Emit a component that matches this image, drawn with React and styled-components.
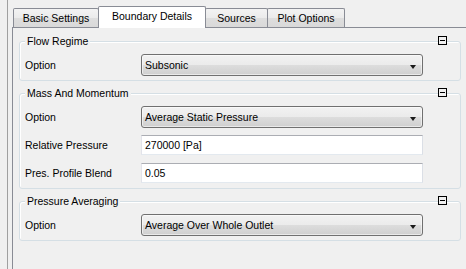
import React from "react";
import styled, { createGlobalStyle } from "styled-components";

const GlobalStyle = createGlobalStyle`
  html, body { margin: 0; padding: 0; background: #f0f0f0; overflow: hidden; }
  body {
    font-family: "Liberation Sans", Arial, sans-serif;
    font-size: 10.5px;
    color: #000;
  }
  * { box-sizing: border-box; }
`;

const Window = styled.div`
  height: 269px;
  padding-left: 7px;
`;

const Frame = styled.div`
  height: 100%;
  border-left: 1px solid #a0a0a0;
  padding: 6px 0 0 4px;
  display: flex;
  flex-direction: column;
`;

const TabBar = styled.div`
  display: flex;
  align-items: flex-end;
  height: 21px;
  padding-left: 1px;
  position: relative;
  z-index: 1;
`;

const Tab = styled.div`
  width: ${(p) => p.$w}px;
  height: ${(p) => (p.$active ? 22 : 19)}px;
  margin-bottom: ${(p) => (p.$active ? -1 : 0)}px;
  margin-left: -1px;
  &:first-child { margin-left: 0; }
  border: 1px solid #898c95;
  border-bottom: none;
  border-radius: 2px 2px 0 0;
  background: ${(p) =>
    p.$active
      ? "#ffffff"
      : "linear-gradient(#f3f3f3 0%, #ebebeb 50%, #dedede 51%, #d9d9d9 100%)"};
  position: relative;
  z-index: ${(p) => (p.$active ? 2 : 1)};
  text-align: center;
  line-height: ${(p) => (p.$active ? 19 : 18)}px;
  white-space: nowrap;
`;

const Pane = styled.div`
  flex: 1;
  border-top: 1px solid #898c95;
  border-left: 1px solid #898c95;
  padding: 13px 0 0 6px;
  display: flex;
  flex-direction: column;
  gap: 12px;
`;

const Group = styled.div`
  position: relative;
  width: 442px;
  border: 1px solid #d5dfe5;
  border-radius: 3px;
  box-shadow: inset 1px 1px 0 #ffffff;
  padding: 12px 0 4px 5px;
  display: grid;
  grid-template-columns: 116px 282px;
  row-gap: 6px;
  align-items: center;
`;

const GroupTitle = styled.div`
  position: absolute;
  top: -7px;
  left: 5px;
  padding: 0 2px;
  line-height: 13px;
  background: #f0f0f0;
  white-space: nowrap;
`;

const Collapse = styled.div`
  position: absolute;
  top: -6px;
  right: 13px;
  width: 9px;
  height: 9px;
  border: 1px solid #000;
  background: #f0f0f0;
  &::after {
    content: "";
    position: absolute;
    left: 1px;
    top: 3px;
    width: 5px;
    height: 1px;
    background: #000;
  }
`;

const Label = styled.div`
  white-space: nowrap;
  line-height: 22px;
`;

const Combo = styled.div`
  height: 22px;
  border: 1px solid #707070;
  border-radius: 3px;
  background: linear-gradient(#f2f2f2 0%, #ebebeb 50%, #dddddd 50%, #cfcfcf 100%);
  box-shadow: inset 0 0 0 1px rgba(255, 255, 255, 0.55);
  display: flex;
  align-items: center;
  justify-content: space-between;
  padding: 0 6px 0 3px;
  white-space: nowrap;
`;

const Arrow = styled.span`
  width: 0;
  height: 0;
  margin-top: 3px;
  border-left: 3.5px solid transparent;
  border-right: 3.5px solid transparent;
  border-top: 4px solid #1a1a1a;
`;

const Field = styled.div`
  height: 20px;
  border: 1px solid;
  border-color: #abadb3 #dbdfe6 #e3e9ef #e2e3ea;
  background: #ffffff;
  padding-left: 3px;
  line-height: 18px;
  white-space: nowrap;
`;

const tabs = [
  { label: "Basic Settings", w: 86 },
  { label: "Boundary Details", w: 108, active: true },
  { label: "Sources", w: 63 },
  { label: "Plot Options", w: 78 },
];

const groups = [
  {
    title: "Flow Regime",
    rows: [{ label: "Option", combo: "Subsonic" }],
  },
  {
    title: "Mass And Momentum",
    rows: [
      { label: "Option", combo: "Average Static Pressure" },
      { label: "Relative Pressure", field: "270000 [Pa]" },
      { label: "Pres. Profile Blend", field: "0.05" },
    ],
  },
  {
    title: "Pressure Averaging",
    rows: [{ label: "Option", combo: "Average Over Whole Outlet" }],
  },
];

export default function App() {
  return (
    <>
      <GlobalStyle />
      <Window>
        <Frame>
          <TabBar>
            {tabs.map((t) => (
              <Tab key={t.label} $w={t.w} $active={t.active}>
                {t.label}
              </Tab>
            ))}
          </TabBar>
          <Pane>
            {groups.map((g) => (
              <Group key={g.title}>
                <GroupTitle>{g.title}</GroupTitle>
                <Collapse />
                {g.rows.map((r) => (
                  <React.Fragment key={r.label}>
                    <Label>{r.label}</Label>
                    {r.combo ? (
                      <Combo>
                        <span>{r.combo}</span>
                        <Arrow />
                      </Combo>
                    ) : (
                      <Field>{r.field}</Field>
                    )}
                  </React.Fragment>
                ))}
              </Group>
            ))}
          </Pane>
        </Frame>
      </Window>
    </>
  );
}
